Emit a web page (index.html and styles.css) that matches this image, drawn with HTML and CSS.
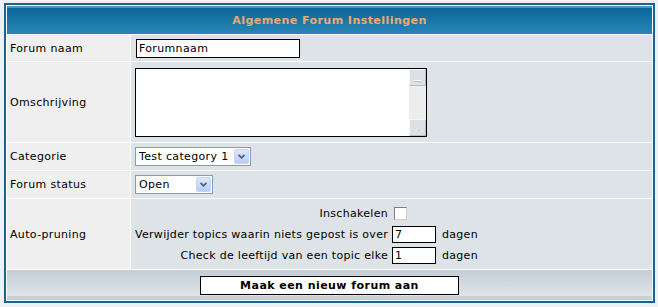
FILE: index.html
```html
<!DOCTYPE html>
<html lang="nl">
<head>
<meta charset="utf-8">
<title>Algemene Forum Instellingen</title>
<link rel="stylesheet" href="styles.css">
</head>
<body>
<form class="form">
<table class="forumline">
  <tr class="r-head"><th colspan="2" class="head">Algemene Forum Instellingen</th></tr>
  <tr class="r-name">
    <td class="row1">Forum naam</td>
    <td class="row2"><input class="text name" type="text" value="Forumnaam"></td>
  </tr>
  <tr class="r-desc">
    <td class="row1">Omschrijving</td>
    <td class="row2">
      <div class="ta">
        <textarea class="ta-field"></textarea>
        <div class="sb" aria-hidden="true">
          <span class="sb-btn"><svg width="15" height="15" viewBox="0 0 15 15"><path d="M4 10.5h7" stroke="#fff" stroke-width="1"/><path d="M4 11.5h7" stroke="#b9bec3" stroke-width="1"/></svg></span>
          <span class="sb-track"></span>
          <span class="sb-btn"><svg width="15" height="15" viewBox="0 0 15 15"><path d="M7 10.5l2-2" stroke="#fff" stroke-width="1"/><path d="M7.5 11l2-2" stroke="#b9bec3" stroke-width="1"/></svg></span>
        </div>
      </div>
    </td>
  </tr>
  <tr class="r-sel">
    <td class="row1">Categorie</td>
    <td class="row2">
      <span class="sel sel-cat">
        <select class="sel-field"><option>Test category 1</option></select>
        <span class="sel-arrow" aria-hidden="true"><svg width="9" height="7" viewBox="0 0 9 7"><path d="M1.5 1.8l3 3 3-3" fill="none" stroke="#4d6185" stroke-width="1.8"/></svg></span>
      </span>
    </td>
  </tr>
  <tr class="r-sel">
    <td class="row1">Forum status</td>
    <td class="row2">
      <span class="sel sel-status">
        <select class="sel-field"><option>Open</option></select>
        <span class="sel-arrow" aria-hidden="true"><svg width="9" height="7" viewBox="0 0 9 7"><path d="M1.5 1.8l3 3 3-3" fill="none" stroke="#4d6185" stroke-width="1.8"/></svg></span>
      </span>
    </td>
  </tr>
  <tr class="r-prune">
    <td class="row1">Auto-pruning</td>
    <td class="row2">
      <div class="prune">
        <span class="lbl">Inschakelen</span>
        <span class="val"><input class="check" type="checkbox"></span>
        <span class="lbl">Verwijder topics waarin niets gepost is over</span>
        <span class="val"><input class="text num" type="text" value="7"><span>dagen</span></span>
        <span class="lbl">Check de leeftijd van een topic elke</span>
        <span class="val"><input class="text num" type="text" value="1"><span>dagen</span></span>
      </div>
    </td>
  </tr>
  <tr class="r-bottom">
    <td colspan="2" class="cat-bottom"><button type="button" class="main-btn">Maak een nieuw forum aan</button></td>
  </tr>
</table>
</form>
</body>
</html>
```

FILE: styles.css
```css
body {
  margin: 0;
  background: #eef1f3;
  font-family: "DejaVu Sans", Verdana, sans-serif;
  font-size: 11px;
  letter-spacing: 0.35px;
  color: #000;
}

.form {
  margin: 0;
}

.forumline {
  margin: 3px 0 0 4px;
  width: 651px;
  border: 2px solid #196390;
  border-spacing: 1px;
  background: #fff;
}

.forumline td,
.forumline th {
  padding: 0 4px;
  vertical-align: middle;
}

.head {
  height: 28px;
  padding: 0;
  text-align: center;
  font-weight: bold;
  font-size: 11px;
  letter-spacing: 0.45px;
  color: #f2a866;
  background: linear-gradient(#5095ba 0, #5095ba 2px, #0a6698 2px, #2986b5 100%);
}

.row1 {
  width: 117px;
  background: #efefef;
  padding: 0 3px !important;
  white-space: nowrap;
}

.row2 {
  background: #dee3e7;
}

.r-name td { height: 26px; }
.r-desc td { height: 80px; }
.r-sel td { height: 27px; }
.r-prune td { height: 70px; }
.r-bottom td { height: 30px; }

.text {
  box-sizing: border-box;
  border: 1px solid #000;
  background: #fff;
  font-family: "DejaVu Sans", Verdana, sans-serif;
  font-size: 11px;
  letter-spacing: 0.35px;
  color: #000;
  padding: 0 2px;
  margin: 0;
  outline: none;
}

.name {
  display: block;
  width: 164px;
  height: 19px;
  margin-left: 1px;
}

.ta {
  display: flex;
  width: 292px;
  height: 69px;
  box-sizing: border-box;
  border: 1px solid #000;
  background: #fff;
}

.ta-field {
  flex: 1;
  border: none;
  resize: none;
  outline: none;
  padding: 2px;
  margin: 0;
  font-family: "DejaVu Sans", Verdana, sans-serif;
  font-size: 11px;
  background: #fff;
}

.sb {
  width: 17px;
  display: flex;
  flex-direction: column;
  background: #ededed;
}

.sb-btn {
  box-sizing: border-box;
  height: 17px;
  border: 1px solid;
  border-color: #f5f6f7 #b6bcc2 #b6bcc2 #f5f6f7;
  background: #dde1e5;
  display: flex;
}

.sb-track {
  flex: 1;
}

.sel {
  position: relative;
  display: inline-block;
  vertical-align: middle;
}

.sel-field {
  display: block;
  -webkit-appearance: none;
  appearance: none;
  box-sizing: border-box;
  height: 19px;
  border: 1px solid #7f9db9;
  border-radius: 0;
  background: #fff;
  font-family: "DejaVu Sans", Verdana, sans-serif;
  font-size: 11px;
  letter-spacing: 0.35px;
  color: #000;
  padding: 0 0 0 3px;
  margin: 0;
  outline: none;
}

.sel-cat .sel-field { width: 116px; }
.sel-status .sel-field { width: 78px; }

.sel-arrow {
  position: absolute;
  top: 2px;
  right: 2px;
  width: 15px;
  height: 15px;
  box-sizing: border-box;
  border: 1px solid #c3d3fd;
  border-radius: 2px;
  background: linear-gradient(#dde7fb, #b9cdf6);
  display: flex;
  align-items: center;
  justify-content: center;
}

.prune {
  display: grid;
  grid-template-columns: 253px auto;
  grid-auto-rows: 21px;
  column-gap: 4px;
  align-items: center;
  justify-content: start;
  letter-spacing: 0.3px;
}

.lbl {
  text-align: right;
  white-space: nowrap;
}

.val {
  display: flex;
  align-items: center;
  gap: 6px;
}

.num {
  width: 44px;
  height: 17px;
}

.check {
  -webkit-appearance: none;
  appearance: none;
  width: 13px;
  height: 13px;
  margin: 0 0 0 2px;
  box-sizing: border-box;
  border: 1px solid;
  border-color: #7d7d7d #cfcfcf #cfcfcf #7d7d7d;
  background: #fff;
}

.cat-bottom {
  text-align: center;
  background: linear-gradient(#c4cdd5 0, #dfe4e8 26px, #c9d0d5 26px, #c9d0d5 100%);
}

.main-btn {
  box-sizing: border-box;
  width: 259px;
  height: 19px;
  border: 1px solid #000;
  background: #fff;
  font-family: "DejaVu Sans", Verdana, sans-serif;
  font-size: 11px;
  font-weight: bold;
  letter-spacing: 0.45px;
  color: #000;
  padding: 0;
  margin: 0;
  vertical-align: middle;
}
```
